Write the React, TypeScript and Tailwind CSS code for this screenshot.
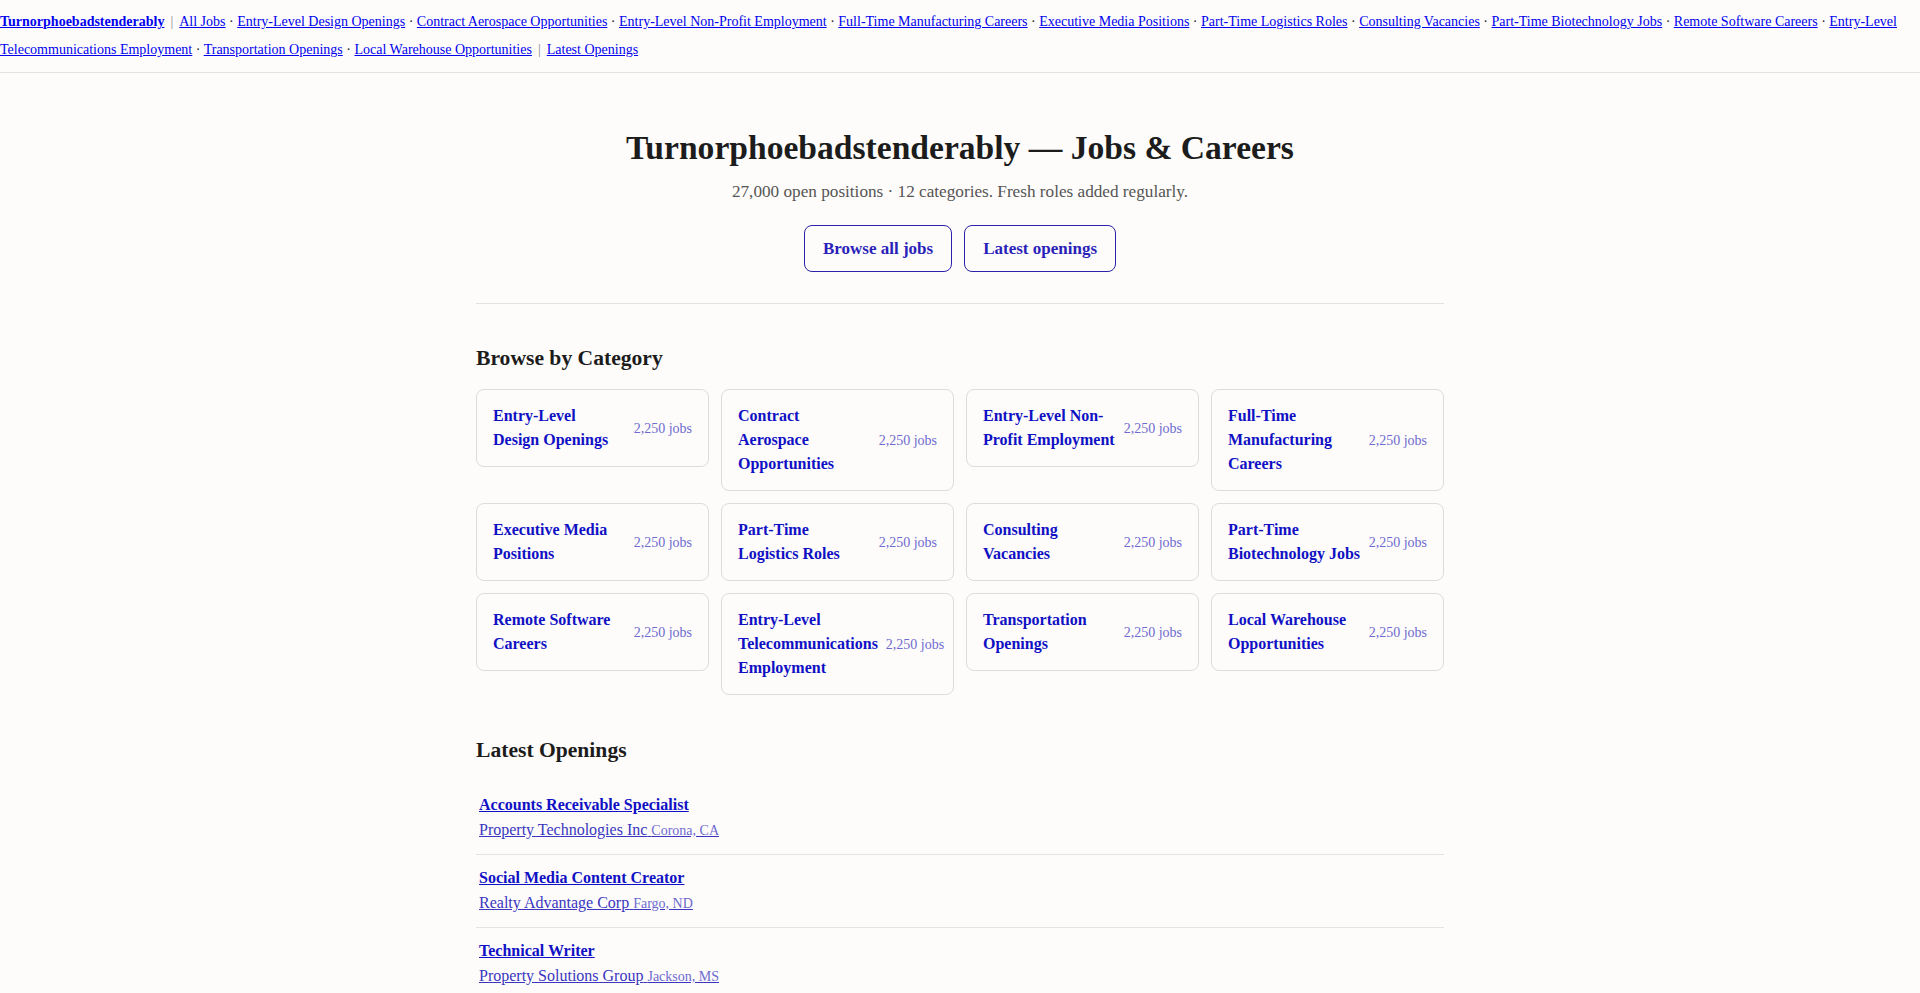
import React from 'react';

const categories = [
  'Entry-Level Design Openings',
  'Contract Aerospace Opportunities',
  'Entry-Level Non-Profit Employment',
  'Full-Time Manufacturing Careers',
  'Executive Media Positions',
  'Part-Time Logistics Roles',
  'Consulting Vacancies',
  'Part-Time Biotechnology Jobs',
  'Remote Software Careers',
  'Entry-Level Telecommunications Employment',
  'Transportation Openings',
  'Local Warehouse Opportunities',
];

const openings = [
  { title: 'Accounts Receivable Specialist', company: 'Property Technologies Inc', location: 'Corona, CA' },
  { title: 'Social Media Content Creator', company: 'Realty Advantage Corp', location: 'Fargo, ND' },
  { title: 'Technical Writer', company: 'Property Solutions Group', location: 'Jackson, MS' },
  { title: 'Warehouse Associate', company: 'Summit Logistics LLC', location: 'Reno, NV' },
];

const TopNav: React.FC = () => (
  <nav className="border-b border-[#e2e2e2] py-2 text-[14px] leading-7 text-[#222]">
    <a href="#" className="font-bold text-[#0000ee] underline">Turnorphoebadstenderably</a>
    <span className="mx-[6px] text-[#888]">|</span>
    <a href="#" className="text-[#0000ee] underline">All Jobs</a>
    {categories.map((c) => (
      <React.Fragment key={c}>
        <span> · </span>
        <a href="#" className="text-[#0000ee] underline">{c}</a>
      </React.Fragment>
    ))}
    <span className="mx-[6px] text-[#888]">|</span>
    <a href="#" className="text-[#0000ee] underline">Latest Openings</a>
  </nav>
);

const App: React.FC = () => {
  return (
    <div className="min-h-screen bg-[#fdfcfa] text-[#1c1c1c]" style={{ fontFamily: '"Liberation Serif", "Times New Roman", serif' }}>
      <TopNav />

      <main className="mx-auto w-[968px]">
        <section className="pt-[53px] pb-[31px] text-center border-b border-[#e2e2e2]">
          <h1 className="text-[33.6px] font-bold leading-[44px] text-[#1c1c1c]">Turnorphoebadstenderably — Jobs &amp; Careers</h1>
          <p className="mt-2 text-[17.2px] leading-[27px] text-[#555]">27,000 open positions · 12 categories. Fresh roles added regularly.</p>
          <div className="mt-5 flex justify-center gap-3">
            <a href="#" className="rounded-lg border border-[#2a22a8] px-[18px] py-3 text-[17px] font-bold leading-[21px] text-[#2a1fb8]">Browse all jobs</a>
            <a href="#" className="rounded-lg border border-[#2a22a8] px-[18px] py-3 text-[17px] font-bold leading-[21px] text-[#2a1fb8]">Latest openings</a>
          </div>
        </section>

        <section className="pt-[38px]">
          <h2 className="text-[21.6px] font-bold leading-8 text-[#1c1c1c]">Browse by Category</h2>
          <div className="mt-[15px] grid grid-cols-4 items-start gap-3">
            {categories.map((c) => (
              <a key={c} href="#" className="flex items-center justify-between gap-2 rounded-lg border border-[#dcdcdc] px-4 py-[14px]">
                <span className="text-base font-bold leading-6 text-[#1010c4]">{c}</span>
                <span className="shrink-0 text-[14px] text-[#6e6ad0]">2,250 jobs</span>
              </a>
            ))}
          </div>
        </section>

        <section className="pt-[39px] pb-10">
          <h2 className="text-[21.6px] font-bold leading-8 text-[#1c1c1c]">Latest Openings</h2>
          <ul className="mt-4">
            {openings.map((o) => (
              <li key={o.title} className="border-b border-[#e4e4e4] px-[3px] pt-[11px] pb-[12px]">
                <a href="#" className="block text-base font-bold leading-6 text-[#1010c4] underline">{o.title}</a>
                <div className="mt-px leading-6">
                  <a href="#" className="text-base text-[#3a36c0] underline">
                    {o.company} <span className="text-[14px] text-[#6e6ad0]">{o.location}</span>
                  </a>
                </div>
              </li>
            ))}
          </ul>
        </section>
      </main>
    </div>
  );
};

export default App;
